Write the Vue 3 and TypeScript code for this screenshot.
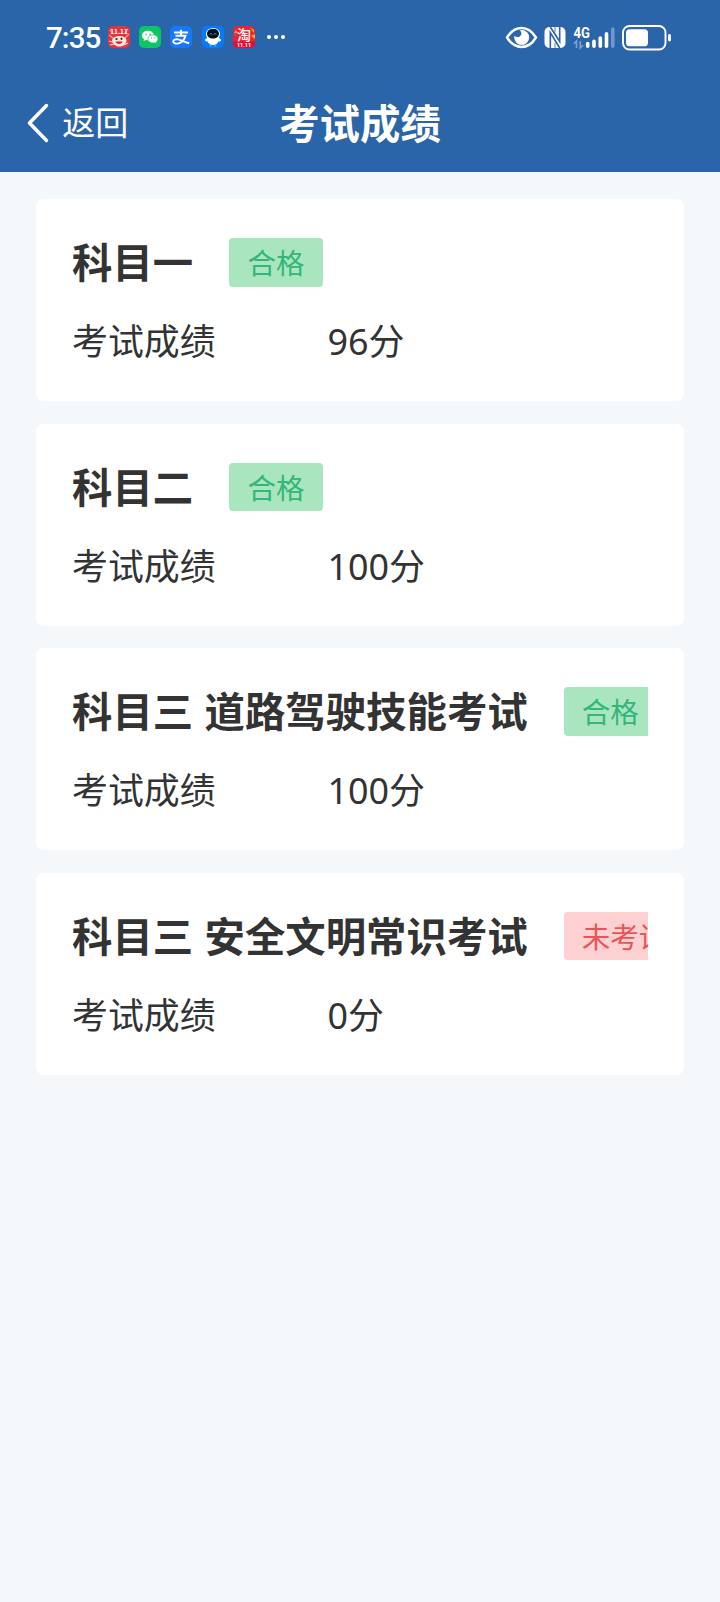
<script setup lang="ts">
interface Exam {
  title: string
  status: string
  passed: boolean
  score: number
}

const exams: Exam[] = [
  { title: '科目一', status: '合格', passed: true, score: 96 },
  { title: '科目二', status: '合格', passed: true, score: 100 },
  { title: '科目三 道路驾驶技能考试', status: '合格', passed: true, score: 100 },
  { title: '科目三 安全文明常识考试', status: '未考试', passed: false, score: 0 },
]
</script>

<template>
  <div class="page">
    <header class="top">
      <div class="status">
        <span class="time">7:35</span>
        <div class="apps">
          <svg class="app" viewBox="0 0 22 22">
            <rect width="22" height="22" rx="5" fill="#e5333a" />
            <path d="M1 9l4 3M21 8l-4 4M2 4l3 4M20 3l-3 4" stroke="#f79a9a" stroke-width="1.2" />
            <text x="11" y="8.400" text-anchor="middle" font-size="6.500" font-weight="700" fill="#fff">11.11</text>
            <path d="M4 14c1-3 4-4 7.500-4s6 1 7 4c0 4-3 6.500-7 6.500S4 18 4 14z" fill="#ffe3dd" />
            <path d="M1 15l3 1M2 19l4-1M16 19l4-2" stroke="#ffd4cd" stroke-width="1.200" />
            <circle cx="8.500" cy="13" r="1.100" fill="#3b2023" />
            <circle cx="13.500" cy="12.800" r="1.100" fill="#3b2023" />
            <path d="M7.500 15.500h7c-.5 3.300-6.500 3.300-7 0z" fill="#c8252e" />
          </svg>
          <svg class="app" viewBox="0 0 22 22">
            <rect width="22" height="22" rx="5" fill="#0bc665" />
            <path d="M9 4.800c-3.500 0-6 2.100-6 4.800 0 1.600.8 2.800 2 3.700l-.5 1.700 2.200-1c.7.2 1.500.3 2.300.3 3.500 0 6-2.100 6-4.700S12.500 4.800 9 4.800z" fill="#fff" />
            <path d="M14 8.800c-2.900 0-5.100 1.800-5.100 4.100s2.200 4.100 5.100 4.100c.6 0 1.200-.1 1.800-.2l1.800.9-.4-1.500c1.100-.8 1.800-1.900 1.800-3.200 0-2.300-2.100-4.200-5-4.200z" fill="#fff" stroke="#0bc665" stroke-width=".7" />
            <g fill="#0bc665">
              <circle cx="7.100" cy="8.300" r=".8" />
              <circle cx="11" cy="8.200" r=".8" />
              <circle cx="12.500" cy="11.800" r=".6" />
              <circle cx="15.700" cy="11.800" r=".6" />
            </g>
          </svg>
          <svg class="app" viewBox="0 0 22 22">
            <rect width="22" height="22" rx="5" fill="#1677ff" />
            <path d="M4 6.500h14M11 3.800v5.700M5.500 9.700h10c-.8 3-3.300 6.600-7 7.600-3 .8-5.300-.3-5.300-1.800s2.100-2.700 4.800-2.100c3 .7 6.500 2.700 11.200 3.800" fill="none" stroke="#fff" stroke-width="1.900" />
          </svg>
          <svg class="app" viewBox="0 0 22 22">
            <rect width="22" height="22" rx="5" fill="#0878ff" />
            <path d="M2.800 14l3-3h10.400l3 3c-.6 1.500-1.700 1.800-2.700 1.500-1 2.500-3 3.500-5.500 3.500s-4.500-1-5.500-3.500c-1 .3-2.100 0-2.700-1.500z" fill="#fff" />
            <rect x="4" y="2.300" width="14" height="11.500" rx="5.700" fill="#fff" />
            <rect x="5" y="3" width="12" height="9.500" rx="4.700" fill="#07121c" />
            <path d="M8 8.500q1-2 2 0M12 8.500q1-2 2 0" fill="none" stroke="#55d9f2" stroke-width=".9" />
            <path d="M7.700 19.800h2M12.300 19.800h2" stroke="#12d0ff" stroke-width="1.300" />
          </svg>
          <svg class="app" viewBox="0 0 22 22">
            <rect width="22" height="22" rx="5" fill="#e9262f" />
            <path d="M1 7l2-3 2 3zM17 1.500l4 2.500v3zM18 10l4-2v5z" fill="#f6a821" />
            <path d="M1 7l3 1-2 3z" fill="#8d52c9" />
            <path d="M0 15.500h22V17a5 5 0 0 1-5 5H5a5 5 0 0 1-5-5z" fill="#e60b39" />
            <text x="11" y="13.800" text-anchor="middle" font-size="14" font-weight="500" fill="#fff">淘</text>
            <text class="sale" x="11" y="20.800" text-anchor="middle" font-size="5.500" font-weight="700" fill="#fff">11.11</text>
          </svg>
        </div>
        <svg class="more" viewBox="0 0 20 6" fill="#fff">
          <circle cx="3" cy="3" r="2" />
          <circle cx="10" cy="3" r="2" />
          <circle cx="17" cy="3" r="2" />
        </svg>
        <svg class="system" viewBox="0 0 170 30">
          <!-- eye comfort -->
          <path d="M2 15.500C6 9 11 6 16.500 6S27 9 31 15.500C27 22 22 25 16.500 25S6 22 2 15.500z" fill="none" stroke="#fff" stroke-width="2.400" />
          <circle cx="16.700" cy="15.500" r="7.500" fill="#fff" />
          <path d="M14.200 7.800c3 2.300 2.800 5.600.2 6.900-1.600.8-3.700.4-5.500-1 .5-3.100 2.500-5.200 5.300-5.900z" fill="#2b65a9" />
          <!-- NFC -->
          <rect x="39.500" y="5" width="21" height="21" rx="5" fill="#fff" />
          <path d="M45.300 26V10.500L54.700 26M45.300 5l9.400 14.500V5" fill="none" stroke="#2b65a9" stroke-width="1.600" />
          <path d="M50 10.500V5M50 20.500V26" stroke="#2b65a9" stroke-width=".8" />
          <!-- mobile signal -->
          <text class="network" x="68.500" y="15.900" font-size="15" font-weight="700" textLength="16.500" lengthAdjust="spacingAndGlyphs" fill="#fff">4G</text>
          <path d="M69 21.800l2.500-2.800v7M75.200 19v7l2.800-2.800" fill="none" stroke="#7ca3d2" stroke-width="1.600" />
          <g stroke="#fff" stroke-width="3.600" stroke-linecap="round">
            <path d="M82.700 21.500v2.800M89 19.200v5.100M95.300 16v8.300M101.500 11.800v12.500" />
            <path d="M107.800 7v17.300" stroke="#6e97ca" />
          </g>
          <!-- battery -->
          <rect x="118" y="4" width="42.500" height="23.500" rx="6.500" fill="none" stroke="#fff" stroke-width="1.900" />
          <rect x="121" y="7.300" width="22" height="17" rx="3.500" fill="#fff" />
          <path d="M164.500 13.500v4.500" stroke="#fff" stroke-width="2.900" stroke-linecap="round" />
        </svg>
      </div>
      <nav class="nav">
        <button class="back" type="button">
          <svg class="chevron" viewBox="0 0 22 40">
            <path d="M19.500 2.500L2.500 20l17 17.500" fill="none" stroke="#fff" stroke-width="3.500" stroke-linecap="round" stroke-linejoin="round" />
          </svg>
          <span>返回</span>
        </button>
        <h1>考试成绩</h1>
      </nav>
    </header>

    <main class="list">
      <section v-for="exam in exams" :key="exam.title" class="card">
        <div class="heading">
          <h2>{{ exam.title }}</h2>
          <span class="tag" :class="exam.passed ? 'pass' : 'pending'">{{ exam.status }}</span>
        </div>
        <div class="result">
          <span class="label">考试成绩</span>
          <span class="value">{{ exam.score }}分</span>
        </div>
      </section>
    </main>
  </div>
</template>

<style>
body {
  background: #f4f8fa;
}
</style>

<style scoped>
.page {
  min-height: 1602px;
  background: #f4f8fa;
  color: #333;
  font-family: "Noto Sans", "Noto Sans CJK SC", sans-serif;
}

.top {
  height: 172px;
  background: #2b65a9;
  color: #fff;
}

.status {
  display: flex;
  align-items: center;
  height: 74px;
  padding: 0 45px 0 46px;
}

.time {
  width: 62px;
  padding-top: 3px;
  font: 500 29.500px/71px Roboto, sans-serif;
  letter-spacing: -0.900px;
}

.apps {
  display: flex;
  gap: 9.200px;
}

.app {
  width: 22px;
  height: 22px;
  font-family: "Noto Sans CJK SC", sans-serif;
}

.sale,
.network {
  font-family: Roboto, sans-serif;
}

.more {
  width: 20px;
  height: 6px;
  margin-left: 11px;
}

.system {
  width: 170px;
  height: 30px;
  margin-left: auto;
}

.nav {
  display: grid;
  grid-template-columns: 1fr auto 1fr;
  align-items: center;
  height: 98px;
}

.back {
  display: flex;
  align-items: center;
  gap: 13.300px;
  padding: 0 0 0 27px;
  border: 0;
  background: none;
  color: inherit;
  font: 400 33px/48px "Noto Sans CJK SC", sans-serif;
}

.back span,
h1 {
  margin: 0 0 4px;
}

.chevron {
  width: 22px;
  height: 40px;
}

h1,
h2 {
  font-family: "Noto Sans CJK SC", sans-serif;
  font-size: 40.400px;
  font-weight: 700;
  line-height: 45px;
  white-space: nowrap;
}

.list {
  display: flex;
  flex-direction: column;
  gap: 22.500px;
  padding: 27px 36px;
}

.card {
  box-sizing: border-box;
  height: 202px;
  padding: 27.300px 36px 0;
  border-radius: 8px;
  background: #fff;
}

.heading {
  display: flex;
  align-items: flex-start;
  gap: 36px;
  padding: 12px 0;
  overflow: hidden;
}

h2 {
  flex: none;
  margin: 0;
  word-spacing: 2.200px;
}

.tag {
  flex: none;
  box-sizing: border-box;
  height: 48.500px;
  padding: 0 19px 0 18.200px;
  border-radius: 4px;
  font: 400 28.500px/47px "Noto Sans CJK SC", sans-serif;
}

.pass {
  background: #a9e6c0;
  color: #34b67a;
}

.pending {
  background: #fdd1d1;
  color: #e95456;
}

.result {
  display: flex;
  margin-top: 18.500px;
  font-size: 35.900px;
  line-height: 50px;
}

.label {
  width: 255.500px;
}
</style>
